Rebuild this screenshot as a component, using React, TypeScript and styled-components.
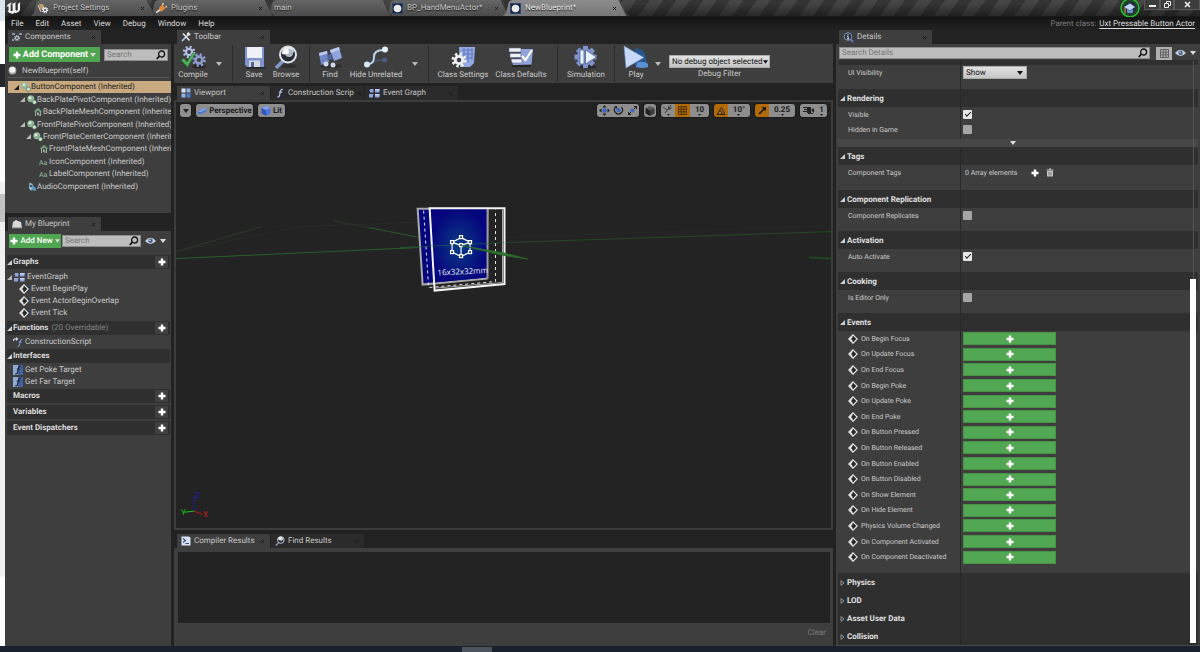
import React from "react";
import styled, { createGlobalStyle, css } from "styled-components";

const GlobalStyle = createGlobalStyle`
  *, *::before, *::after { box-sizing: border-box; }
  body { margin: 0; background: #222; text-rendering: geometricPrecision; }
  body, button, input, select {
    font-family: Roboto, "Liberation Sans", sans-serif;
    font-size: 8px;
    line-height: 12px;
    color: #cacaca;
    text-rendering: geometricPrecision;
  }
  button { border: 0; padding: 0; background: none; cursor: pointer; }
  ul { list-style: none; margin: 0; padding: 0; }
  h2, h3 { margin: 0; font-size: 8px; font-weight: 700; }
  svg { display: block; flex: none; }
`;

/* ---------- page frame ---------- */

const Page = styled.div`
  min-height: 100vh;
  display: flex;
  flex-direction: column;
`;
const Desktop = styled.div`
  flex: 1;
  display: flex;
`;
const BackWindow = styled.div`
  width: 5px;
  display: flex;
  flex-direction: column;
  background: #fff;
`;
const Strip = styled.div<{ $h: number; $c: string }>`
  height: ${(p) => p.$h}px;
  background: ${(p) => p.$c};
`;
const Editor = styled.div`
  flex: 1;
  min-width: 0;
  display: flex;
  flex-direction: column;
  background: #222;
`;
const Taskbar = styled.footer`
  height: 6px;
  display: flex;
  justify-content: center;
  background: #18222e;
  padding-right: 246px;
`;
const TaskItem = styled.div`
  width: 30px;
  margin-top: 1px;
  background: #4a545e;
`;

/* ---------- title bar ---------- */

const TitleBar = styled.header`
  height: 17px;
  display: flex;
  justify-content: space-between;
  background:
    linear-gradient(transparent 20%, rgba(0, 0, 0, 0.4)),
    repeating-linear-gradient(125deg, #454545 0 11px, #343434 11px 22px);
  border-bottom: 1px solid #181818;
`;
const LogoBox = styled.div`
  width: 26px;
  display: flex;
`;
const WindowTabs = styled.nav`
  display: flex;
  align-items: flex-end;
`;
const WindowTab = styled.button<{ $active?: boolean; $z: number }>`
  position: relative;
  z-index: ${(p) => p.$z};
  width: 126px;
  height: 16px;
  margin-right: -8px;
  padding: 0 12px 0 7px;
  display: flex;
  align-items: center;
  gap: 4px;
  text-align: left;
  color: ${(p) => (p.$active ? "#ececec" : "#cacaca")};
  text-shadow: 0 1px 1px #111;
  background: ${(p) =>
    p.$active ? "linear-gradient(#8c8c8c, #777)" : "linear-gradient(#656565, #4b4b4b)"};
  clip-path: polygon(0 100%, 3px 80%, 6px 10%, 9px 0, 115px 0, 118px 10%, 122px 80%, 126px 100%);
  &::after {
    content: "";
    position: absolute;
    right: 4px;
    top: 0;
    width: 2px;
    height: 18px;
    background: #383838;
    transform: rotate(-26deg);
  }
`;
const Grow = styled.span`
  flex: 1;
  white-space: nowrap;
`;
const TitleRight = styled.div`
  display: flex;
`;
const WinButtons = styled.div`
  display: flex;
  margin-left: 3px;
`;
const WinButton = styled.button<{ $w: number }>`
  width: ${(p) => p.$w}px;
  height: 10px;
  display: grid;
  place-items: center;
  background: #3c3c3c;
  border: 1px solid #5a5a5a;
  border-top: 0;
`;
const MenuBar = styled.nav`
  height: 13px;
  display: flex;
  align-items: center;
  justify-content: space-between;
  background: linear-gradient(#141414, #222);
  padding: 0 5px 0 6px;
`;
const MenuItems = styled.div`
  display: flex;
  gap: 12px;
  align-items: center;
`;
const MenuItem = styled.button`
  color: #dadada;
`;
const ParentClass = styled.div`
  color: #7c7c7c;
`;
const ClassLink = styled.a`
  color: #dcdcdc;
  margin-left: 1px;
  text-underline-offset: 2px;
`;

/* ---------- panels ---------- */

const Columns = styled.main`
  flex: 1;
  display: grid;
  grid-template-columns: 166px minmax(0, 1fr) 364px;
  column-gap: 3px;
`;
const Column = styled.div`
  display: flex;
  flex-direction: column;
  min-width: 0;
`;
const TabRow = styled.div<{ $top?: number }>`
  display: flex;
  gap: 1px;
  padding-left: 3px;
  margin-top: ${(p) => p.$top || 0}px;
`;
const PanelTab = styled.button<{ $active?: boolean }>`
  width: 93px;
  height: 14px;
  padding: 0 5px 0 4px;
  display: flex;
  align-items: center;
  gap: 3px;
  text-align: left;
  background: ${(p) => (p.$active ? "#3e3e3e" : "#2b2b2b")};
  color: #c6c6c6;
`;
const Panel = styled.section<{ $fill?: boolean }>`
  background: #3e3e3e;
  ${(p) => p.$fill && css`flex: 1;`}
`;
const ComponentsPanel = styled(Panel)`
  height: 169px;
`;
const Tools = styled.div<{ $gap: number }>`
  display: flex;
  align-items: center;
  padding: 3px 3px 2px 4px;
  gap: ${(p) => p.$gap}px;
`;
const GreenButton = styled.button<{ $big?: boolean }>`
  height: ${(p) => (p.$big ? 15 : 14)}px;
  padding: 0 2px;
  display: flex;
  align-items: center;
  justify-content: center;
  gap: 2px;
  white-space: nowrap;
  background: #4fa550;
  color: #fff;
  font-size: ${(p) => (p.$big ? 9 : 8)}px;
  font-weight: ${(p) => (p.$big ? 700 : 500)};
  width: ${(p) => (p.$big ? 91 : 52)}px;
`;
const SearchBox = styled.label`
  flex: 1;
  min-width: 0;
  height: 12px;
  display: flex;
  align-items: center;
  background: #bdbdbd;
  border: 1px solid #8c8c8c;
  padding: 0 1px 0 2px;
`;
const SearchInput = styled.input`
  flex: 1;
  min-width: 0;
  height: 10px;
  border: 0;
  padding: 0;
  background: none;
  outline: 0;
  line-height: 10px;
  color: #222;
  &::placeholder { color: #777; opacity: 1; }
`;
const SelfRow = styled.div`
  height: 14px;
  margin: 0 2px 0 3px;
  display: flex;
  align-items: center;
  gap: 5px;
  border-bottom: 1px solid #555;
`;
const Tree = styled.ul`
  height: 112px;
  margin: 3px 0 0 3px;
  display: grid;
  grid-auto-rows: 1fr;
`;
const TreeRow = styled.li<{ $depth: number; $selected?: boolean }>`
  min-width: 0;
  min-height: 0;
  display: flex;
  align-items: center;
  overflow: hidden;
  white-space: nowrap;
  padding-left: ${(p) => p.$depth * 6}px;
  ${(p) => p.$selected && css`background: #c9aa80; color: #1b1b1b;`}
`;
const Arrow = styled.span`
  width: 7px;
  flex: none;
`;
const IconSlot = styled.span`
  width: 10px;
  flex: none;
`;

const SectionHead = styled.div<{ $gap?: boolean }>`
  height: 14px;
  margin: ${(p) => (p.$gap ? "0 1px 2px 2px" : "0 1px 0 2px")};
  padding: 0 2px 0 0;
  display: flex;
  align-items: center;
  background: #2f2f2f;
  color: #dcdcdc;
`;
const HeadArrow = styled.span`
  width: 6px;
`;
const Note = styled.span`
  margin-left: 3px;
  color: #858585;
`;
const AddButton = styled.button`
  width: 13px;
  height: 12px;
  margin-left: auto;
  display: grid;
  place-items: center;
  background: #404040;
`;
const Graphs = styled.div`
  padding-top: 5px;
`;
const GraphList = styled.ul<{ $pad?: number }>`
  padding: ${(p) => p.$pad || 1}px 0;
`;
const GraphRow = styled.li<{ $indent: number }>`
  height: 12px;
  display: flex;
  align-items: center;
  gap: 2px;
  padding-left: ${(p) => p.$indent}px;
`;

/* ---------- toolbar ---------- */

const ToolbarPanel = styled.div`
  height: 39px;
  display: flex;
  background: #3e3e3e;
`;
const ToolButton = styled.button<{ $w: number }>`
  width: ${(p) => p.$w}px;
  padding-top: 1px;
  display: flex;
  flex-direction: column;
  align-items: center;
  white-space: nowrap;
`;
const DropButton = styled.button`
  width: 14px;
  display: grid;
  place-items: center;
`;
const Separator = styled.div`
  width: 1px;
  margin: 1px 6px;
  background: #2b2b2b;
`;
const Filter = styled.div`
  margin-left: 4px;
  padding-top: 11px;
  display: flex;
  flex-direction: column;
  align-items: center;
`;
const SelectBox = styled.div<{ $w: number; $edge: number }>`
  position: relative;
  width: ${(p) => p.$w}px;
  height: 13px;
  & > svg { position: absolute; right: ${(p) => p.$edge}px; top: 5px; pointer-events: none; }
`;
const Select = styled.select`
  appearance: none;
  width: 100%;
  height: 13px;
  padding: 0 2px;
  border: 1px solid #aaa;
  border-radius: 0;
  background: linear-gradient(#e2e2e2, #c4c4c4);
  color: #111;
  line-height: 11px;
`;

/* ---------- viewport ---------- */

const Viewport = styled.section`
  position: relative;
  flex: 1;
  min-height: 200px;
  border: 2px solid #3c3c3c;
  background: #232323;
`;
const Scene = styled.svg`
  position: absolute;
  inset: 0;
  width: 100%;
  height: 100%;
`;
const ViewBar = styled.div`
  position: relative;
  display: flex;
  align-items: center;
  gap: 3px;
  padding: 1px 3px;
`;
const Spacer = styled.div`
  flex: 1;
`;
const ViewGroup = styled.div`
  display: flex;
  height: 15px;
  overflow: hidden;
  border-radius: 4px;
  border: 1px solid #1a1a1a;
`;
const ViewButton = styled.button<{ $w: number; $on?: boolean }>`
  width: ${(p) => p.$w}px;
  display: flex;
  align-items: center;
  justify-content: center;
  gap: 2px;
  font-weight: 700;
  color: #1c1c1c;
  background: ${(p) => (p.$on ? "#b36b08" : "#8e8e8e")};
`;
const NumStack = styled.span`
  display: flex;
  flex-direction: column;
  align-items: center;
  line-height: 9px;
`;

/* ---------- compiler results ---------- */

const Results = styled.section`
  height: 98px;
  padding: 4px 3px 0 4px;
  display: flex;
  flex-direction: column;
  background: #3e3e3e;
`;
const Log = styled.div`
  height: 71px;
  background: #222;
`;
const ClearButton = styled.button`
  align-self: flex-end;
  margin: 4px 4px 0 0;
  color: #7a7a7a;
`;

/* ---------- details ---------- */

const DetailsPanel = styled(Panel)`
  padding: 2px 2px 0 2px;
  border-bottom: 1px solid #4a4a4a;
`;
const DetailTools = styled.div`
  display: flex;
  align-items: center;
  height: 14px;
  padding-left: 1px;
`;
const GridButton = styled.button`
  width: 16px;
  height: 13px;
  margin: 0 0 0 6px;
  display: grid;
  place-items: center;
  background: #b0b0b0;
`;
const ViewOptions = styled.button`
  display: flex;
  align-items: center;
  gap: 4px;
  margin: 0 2px 0 3px;
`;
const DetailBody = styled.div`
  position: relative;
`;
const Scrollbar = styled.div`
  position: absolute;
  top: 1px;
  right: 2px;
  bottom: 2px;
  width: 6px;
  padding-top: 218px;
  display: flex;
  background: linear-gradient(90deg, transparent 3px, #555 3px 4px, transparent 4px);
`;
const Thumb = styled.div`
  flex: 1;
  background: #fff;
`;
const Cells = styled.div`
  display: grid;
  grid-template-columns: 122px minmax(0, 1fr);
`;
const Category = styled(Cells)`
  height: 18px;
  background: #2f2f2f;
  color: #e0e0e0;
`;
const CategoryName = styled.h3`
  display: flex;
  align-items: center;
  gap: 2px;
  padding: 1px 0 0 2px;
  white-space: nowrap;
`;
const Value = styled.div`
  border-left: 1px solid #282828;
  padding-left: 2px;
  display: flex;
  align-items: center;
`;
const Rows = styled(Cells)<{ $pad: number }>`
  & > * { height: 15px; }
  & > *:nth-last-child(-n + 2) { height: ${(p) => 15 + p.$pad}px; padding-bottom: ${(p) => p.$pad}px; }
`;
const Name = styled.label`
  display: flex;
  align-items: center;
  gap: 3px;
  padding-left: 10px;
  white-space: nowrap;
  font-size: 7px;
`;
const Sliver = styled(Cells)`
  height: 5px;
  background: #2f2f2f;
`;
const Expander = styled.button`
  width: 100%;
  height: 8px;
  display: grid;
  place-items: center;
  padding-right: 10px;
  background: #474747;
`;
const Check = styled.input`
  appearance: none;
  width: 9px;
  height: 9px;
  margin: 0;
  background: #a5a5a5;
  border-radius: 1px;
  &:checked { background: #e6e6e6; }
  &:checked::after {
    content: "";
    display: block;
    width: 6px;
    height: 3px;
    margin: 2px 0 0 2px;
    border-left: 1px solid #222;
    border-bottom: 1px solid #222;
    transform: rotate(-45deg);
  }
`;
const ArrayText = styled.span`
  margin: 0 14px 0 2px;
  font-size: 7px;
`;
const SmallButton = styled.button`
  margin-right: 7px;
`;
const EventRows = styled.ul`
  height: 242px;
  padding-bottom: 8px;
  display: grid;
  grid-auto-rows: 1fr;
  background: linear-gradient(90deg, transparent 122px, #282828 122px 123px, transparent 123px);
`;
const EventRow = styled.li`
  display: grid;
  grid-template-columns: 125px 93px;
  align-items: center;
`;
const EventButton = styled.button`
  height: 13px;
  display: grid;
  place-items: center;
  background: #52a852;
  border: 1px solid #479247;
`;

/* ---------- icons ---------- */

const Close = () => (
  <svg width="5" height="5" viewBox="0 0 5 5" stroke="#1a1a1a" strokeWidth="1">
    <path d="M1 1l3 3M4 1L1 4" />
  </svg>
);
const Down = ({ c = "#ddd", s = 6 }: { c?: string; s?: number }) => (
  <svg width={s} height="4" viewBox="0 0 6 4" fill={c}>
    <path d="M0 0h6L3 4z" />
  </svg>
);
const Plus = ({ s = 8 }: { s?: number }) => (
  <svg width={s} height={s} viewBox="0 0 8 8" fill="#fff">
    <path d="M2.800 .5h2.400v2.300h2.300v2.400H5.200v2.300H2.800V5.200H.500V2.800h2.300z" />
  </svg>
);
const Open = ({ c = "#d0d0d0" }: { c?: string }) => (
  <svg width="5" height="5" viewBox="0 0 5 5" fill={c}>
    <path d="M5 0v5H0z" />
  </svg>
);
const Closed = () => (
  <svg width="5" height="6" viewBox="0 0 5 6" fill="none" stroke="#aaa" strokeWidth=".8">
    <path d="M1 .6L4 3 1 5.400z" />
  </svg>
);
const Lens = () => (
  <svg width="10" height="10" viewBox="0 0 10 10" fill="none" stroke="#111" strokeWidth="1.300">
    <circle cx="5.600" cy="4" r="3" />
    <path d="M3.400 6.200L.8 9" strokeWidth="1.800" />
  </svg>
);
const Eye = () => (
  <svg width="11" height="8" viewBox="0 0 11 8">
    <path d="M0 4Q5.500-2.500 11 4 5.500 10 0 4z" fill="#ccd2da" />
    <circle cx="5.500" cy="3.800" r="2.200" fill="#3d5a85" />
    <circle cx="5" cy="3.200" r=".8" fill="#fff" />
  </svg>
);
const Ball = () => (
  <svg width="9" height="9" viewBox="0 0 9 9">
    <circle cx="4.500" cy="4.500" r="3.900" fill="#a9a9a9" />
    <circle cx="4.300" cy="3.800" r="3" fill="#f2f2f2" />
  </svg>
);
const BpTab = () => (
  <svg width="11" height="11" viewBox="0 0 11 11">
    <rect width="11" height="11" fill="#2b4679" />
    <rect x="1" y="1" width="9" height="9" fill="#1a2338" />
    <circle cx="5.500" cy="5.500" r="3.800" fill="#e9e9e9" />
  </svg>
);
const SceneIcon = () => (
  <svg width="10" height="10" viewBox="0 0 10 10">
    <circle cx="3.800" cy="3.800" r="3.500" fill="#8fb596" />
    <circle cx="3" cy="2.800" r="1.500" fill="#d8e8da" />
    <circle cx="7.400" cy="7.200" r="2.100" fill="#c5e4c8" stroke="#3c4c3e" strokeWidth=".5" />
  </svg>
);
const MeshIcon = () => (
  <svg width="10" height="10" viewBox="0 0 10 10" fill="none" stroke="#8fb596">
    <path d="M2.500 9V4.500L5 2.500l2.500 2V9" strokeWidth="1.100" />
    <path d="M4.600 8V5.500L6 6.500V9" stroke="#c4dcc8" strokeWidth=".8" />
    <path d="M1 4.500l4-3.500 4 3.500" stroke="#5f8a68" />
  </svg>
);
const TextIcon = () => (
  <svg width="10" height="8" viewBox="0 0 10 8">
    <text x="0" y="7" fontSize="7" fontFamily="Roboto" fill="#93b899">Aa</text>
  </svg>
);
const AudioIcon = () => (
  <svg width="10" height="10" viewBox="0 0 10 10">
    <path d="M2.500.5l3 1.500 1 6-3 .5L2 6z" fill="#9fc6da" />
    <path d="M4 7.500l4.500 1.700.8-2.700L6 3.500z" fill="#5b95b5" />
    <circle cx="4" cy="4" r="1.200" fill="#244d66" />
  </svg>
);
const Diamond = () => (
  <svg width="10" height="10" viewBox="0 0 10 10">
    <path d="M5 .8L9.200 5 5 9.200.8 5z" fill="#262626" stroke="#e4e4e4" strokeWidth="1.200" />
    <path d="M4.500 1.500v7L1 5z" fill="#e4e4e4" />
    <path d="M5 3L3 5l2 2z" fill="#262626" />
  </svg>
);
const GraphIcon = () => (
  <svg width="11" height="9" viewBox="0 0 11 9">
    <path d="M0 1.500h4M2 5.500h3" stroke="#6b7fae" />
    <path d="M1 0h3.500v3.500H1zM6 0h4.500v3.500H6zM0 5h4v3.500H0zM6 5h4.500v3.500H6z" fill="#8fa6dd" />
    <path d="M6 0h4.500v1.500H6zM6 5h4.500v1.500H6z" fill="#c3cff0" />
  </svg>
);
const FuncIcon = ({ boxed }: { boxed?: boolean }) => (
  <svg width="10" height="10" viewBox="0 0 10 10">
    {boxed && (
      <>
        <rect width="10" height="10" fill="#8fa9d6" />
        <path d="M5 0h5v10H5z" fill="#45619c" />
      </>
    )}
    <path
      d="M8 1.500Q6 .8 5.500 3L4.500 7.500Q4 9.500 2.200 8.800M3.800 4.200h3.400"
      fill="none"
      stroke={boxed ? "#182848" : "#a9bdec"}
      strokeWidth="1.200"
    />
  </svg>
);
const ScriptIcon = () => (
  <svg width="10" height="10" viewBox="0 0 10 10" fill="none">
    <path d="M0 4Q1 1.500 3.500 2" stroke="#ccd8f5" strokeWidth="1.200" />
    <path d="M3 0l2.500 2L3 4z" fill="#ccd8f5" />
    <path d="M9.500 2.500Q7.800 2.200 7.400 4L6.600 8Q6.200 9.800 4.600 9.300M5.500 5h3" stroke="#7f9ce0" />
  </svg>
);
const ViewportIcon = () => (
  <svg width="10" height="10" viewBox="0 0 10 10">
    <path d="M.5.5h4v4h-4z" fill="#dce4f5" />
    <path d="M5.500.5h4v4h-4zM.5 5.500h4v4h-4z" fill="#8fb3e6" />
    <path d="M5.500 5.500h4v4h-4z" fill="#4f7fc8" />
  </svg>
);
const Gear = ({ x, y, r, fill, hole }: { x: number; y: number; r: number; fill: string; hole: string }) => (
  <g>
    <circle cx={x} cy={y} r={r} fill="none" stroke={fill} strokeWidth={r * 0.5} strokeDasharray={`${(r * Math.PI) / 8}`} />
    <circle cx={x} cy={y} r={r * 0.85} fill={fill} />
    <circle cx={x} cy={y} r={r * 0.38} fill={hole} />
  </g>
);
const ComponentsIcon = () => (
  <svg width="10" height="10" viewBox="0 0 10 10">
    <Gear x={5} y={6} r={2.4} fill="#c4cbd8" hole="#333" />
    <path d="M0 1h3v2H0zM7 1h3v2H7zM0 7h2v2H0z" fill="#8592ad" />
  </svg>
);
const BookIcon = () => (
  <svg width="10" height="9" viewBox="0 0 10 9">
    <path d="M1 2l3-2 2 1 3 1 1 6H0z" fill="#d8d8d8" />
    <path d="M0 8h10" stroke="#777" />
  </svg>
);
const WrenchIcon = () => (
  <svg width="10" height="10" viewBox="0 0 10 10" fill="none">
    <path d="M1 9l6-6" stroke="#b9cdf0" strokeWidth="1.600" />
    <path d="M9.300 1.700L7.700 3 6.500 2 7.900.5M2 1.500l6.500 7" stroke="#ececec" strokeWidth="1.500" />
  </svg>
);
const DetailsIcon = () => (
  <svg width="11" height="11" viewBox="0 0 11 11">
    <circle cx="5" cy="4.600" r="3.800" fill="#2a303c" stroke="#7c93c9" />
    <path d="M7.600 7.400l2.600 2.800" stroke="#5f7fc8" strokeWidth="1.800" />
    <path d="M5 2.200v1.200M4 4.400h1.200v2.400M4 7h2.400" stroke="#e8e8e8" fill="none" />
  </svg>
);
const ResultsIcon = () => (
  <svg width="10" height="10" viewBox="0 0 10 10">
    <path d="M.5.5h7l2 1v8h-9z" fill="#d9e3f2" />
    <path d="M2 2.500l2.500 2L2 6.500M4.500 7.500h3.500" stroke="#2c4f86" fill="none" strokeWidth="1.200" />
  </svg>
);
const MagnifierIcon = ({ s }: { s: number }) => (
  <svg width={s} height={s} viewBox="0 0 24 24">
    <path d="M9 16l-7 7" stroke="#8197cf" strokeWidth="3.500" />
    <ellipse cx="15" cy="21" rx="8" ry="2" fill="#262626" opacity=".6" />
    <circle cx="14" cy="9.500" r="8" fill="#252a30" stroke="#dfe5ee" strokeWidth="2" />
    <path d="M8 9a6 6 0 0112-2q-4 4-12 2z" fill="#e9edf2" />
    <circle cx="15" cy="8" r="4" fill="#aeb7c2" />
    <circle cx="12.500" cy="6.500" r="2.500" fill="#fff" />
  </svg>
);
const Logo = () => (
  <svg width="18" height="16" viewBox="0 0 18 16">
    <path
      d="M1 7.500Q3 3 7 2.500 5.600 3.500 5.600 5v5.500q1 1.300 2 .3V5Q7.600 4 7 3.800 9.500 3.300 10.500 2.300V10q.8 1 1.600.5.700-.5.700-1V4.500Q13 3 15.500 2 14.900 3 15 4v6Q13.500 13 10.300 13.300L9.200 12.500 8 14Q4 13.500 2.300 11q1.200.2 1.300-.8V6.500Q2.500 5.500 1 7.500z"
      fill="#f2f2f2"
    />
  </svg>
);
const SettingsTabIcon = () => (
  <svg width="11" height="11" viewBox="0 0 11 11">
    <path d="M1 1h4l1 2v3H2z" fill="#b99d72" />
    <path d="M0 2l3 7" stroke="#e5d3b0" />
    <Gear x={7} y={7} r={2.6} fill="#ececec" hole="#444" />
  </svg>
);
const PluginIcon = () => (
  <svg width="11" height="11" viewBox="0 0 11 11">
    <path d="M3 5l3-3.500L9.500 5 6 8.500 3.500 8z" fill="#e3893a" />
    <path d="M6 1.500l2-1M9.500 4.500l1.300-1.500" stroke="#f3c79c" strokeWidth="1.400" />
    <path d="M4 7L0 9.500" stroke="#d8d8d8" strokeWidth="1.600" />
  </svg>
);

const CompileIcon = () => (
  <svg width="26" height="24" viewBox="0 0 26 24">
    <ellipse cx="19" cy="21.500" rx="7" ry="1.800" fill="#262626" />
    <Gear x={9} y={7} r={5} fill="#b3bfe6" hole="#3e3e3e" />
    <Gear x={19} y={15} r={5.5} fill="#8d9bcb" hole="#3e3e3e" />
    <path d="M1 15l3-1.500L7 17 13 7.500 15 9 7.500 22z" fill="#4cb35c" stroke="#2d6e38" strokeWidth=".5" />
  </svg>
);
const SaveIcon = () => (
  <svg width="24" height="24" viewBox="0 0 24 24">
    <path d="M4 22h20v1.500H4z" fill="#262626" />
    <path d="M3 2h19v20H5l-2-2z" fill="#7e93cf" />
    <path d="M5 2h15v11H5z" fill="#eef1f8" />
    <path d="M7 15.500h11V22H7z" fill="#d5d9e2" />
    <path d="M9 17h3v5H9z" fill="#51619a" />
  </svg>
);
const FindIcon = () => (
  <svg width="26" height="24" viewBox="0 0 26 24">
    <ellipse cx="14" cy="21" rx="11" ry="2" fill="#262626" opacity=".7" />
    <path d="M2 8l8-2 2 11-8 3z" fill="#7287c6" />
    <path d="M13 5l9-3 3 11-8 3z" fill="#8fa3dc" />
    <path d="M2 8l8-2 .5 2.500L2.500 11zM13 5l9-3 .7 3-9 3z" fill="#bac8ee" />
    <path d="M10 10l5-1 .8 5-5 1z" fill="#52639c" />
    <circle cx="9" cy="19" r="2.500" fill="#cfd7ea" />
    <circle cx="16" cy="20" r="2.500" fill="#cfd7ea" />
  </svg>
);
const HideIcon = () => (
  <svg width="26" height="24" viewBox="0 0 26 24" fill="none">
    <path d="M5 19q6 0 6-7t9-7" stroke="#b7d2e6" strokeWidth="2" />
    <path d="M11 17q3-2 9-2" stroke="#4a5670" strokeWidth="1.500" />
    <circle cx="22" cy="4.500" r="3" fill="#e2f0fa" />
    <circle cx="4" cy="19.500" r="3" fill="#d3e8f6" />
    <circle cx="21.500" cy="15" r="2.500" fill="#4c5d80" />
  </svg>
);
const ClassSettingsIcon = () => (
  <svg width="26" height="24" viewBox="0 0 26 24">
    <path d="M9 2l16 0-1 16-4 4H10z" fill="#93a9e2" />
    <path d="M12 5h11M12 9h11M12 13h10M14 3v10M18 3v14M22 3v12" stroke="#6179bd" />
    <Gear x={9} y={15} r={6} fill="#f0f0f0" hole="#3a3f4c" />
  </svg>
);
const ClassDefaultsIcon = () => (
  <svg width="26" height="24" viewBox="0 0 26 24">
    <path d="M4 20h19v2H4z" fill="#262626" />
    <path d="M13 4h12l-1.500 15.500L5 20 3.500 14H13z" fill="#90a4dc" />
    <path d="M1 3h12v4H1zM2 8.500h11v4H2zM3 14h11v4H4z" fill="#eef0f5" stroke="#5b6995" strokeWidth=".6" />
    <path d="M14 11l3.500 4L24 5" fill="none" stroke="#fff" strokeWidth="2" />
  </svg>
);
const SimulationIcon = () => (
  <svg width="26" height="24" viewBox="0 0 26 24">
    <ellipse cx="15" cy="22" rx="9" ry="1.500" fill="#262626" />
    <g stroke="#7e93cd" strokeWidth="5">
      <path d="M12.500 1v22M1.500 12h22M4.700 4.200l15.600 15.600M20.300 4.200L4.700 19.800" />
    </g>
    <circle cx="12.500" cy="12" r="8.500" fill="#7e93cd" />
    <path d="M7 5h4v14H7zM12.500 5l11 7-11 7z" fill="#e9f2fb" stroke="#4f628f" strokeWidth=".8" />
  </svg>
);
const PlayIcon = () => (
  <svg width="26" height="24" viewBox="0 0 26 24">
    <path d="M12 3q12 1 11 13 3 2 2 5-6 3-13 1z" fill="#27568f" />
    <path d="M14 18q6-3 11 1v3q-5 2-12 0z" fill="#5c92d4" />
    <path d="M1 1l20 11.500L3 23z" fill="#c6d9f6" stroke="#7392c8" strokeWidth=".6" />
  </svg>
);
const PillIcon = () => (
  <svg width="10" height="8" viewBox="0 0 10 8">
    <path d="M1 4.500L7 1l3 1-1 2.500L3 7.500.500 6.500z" fill="#4a78cf" />
    <path d="M1 4.500L7 1l3 1-6 3z" fill="#7fa4ea" />
  </svg>
);
const CubeIcon = ({ a, b, c }: { a: string; b: string; c: string }) => (
  <svg width="10" height="10" viewBox="0 0 10 10">
    <path d="M5 0l4.500 2L5 4.200.500 2z" fill={a} />
    <path d="M.5 2L5 4.200V10L.500 7.500z" fill={b} />
    <path d="M9.500 2L5 4.200V10l4.500-2.500z" fill={c} />
  </svg>
);
const MoveIcon = () => (
  <svg width="11" height="11" viewBox="0 0 11 11">
    <path d="M5.500 0l2 2.500h-4zM5.500 11l2-2.500h-4zM0 5.500l2.500-2v4zM11 5.500l-2.500-2v4z" fill="#222" />
    <circle cx="5.500" cy="5.500" r="2.200" fill="#3f68c4" />
  </svg>
);
const RotateIcon = () => (
  <svg width="11" height="11" viewBox="0 0 11 11">
    <path d="M8.500 2.200a4 4 0 11-6 0" fill="none" stroke="#222" strokeWidth="1.200" />
    <path d="M1 1.500l3-.5v3z" fill="#222" />
    <circle cx="5.500" cy="5" r="2.200" fill="#3f68c4" />
  </svg>
);
const ScaleIcon = () => (
  <svg width="11" height="11" viewBox="0 0 11 11">
    <path d="M6.500 1H10v3.500zM1 6.500V10h3.500z" fill="#222" />
    <path d="M2 9l7-7" stroke="#222" />
    <circle cx="5.500" cy="5.500" r="2" fill="#3f68c4" />
  </svg>
);
const SurfaceIcon = () => (
  <svg width="10" height="11" viewBox="0 0 10 11" fill="none" stroke="#2a2a2a">
    <path d="M0 2l4 3 5-2M4 5l-2 3M5.500 1v3M8 0L6 4" strokeWidth=".8" />
    <path d="M4 9h3l-1.500 2z" fill="#2a2a2a" stroke="none" />
  </svg>
);
const GridIcon = ({ c, s = 9 }: { c: string; s?: number }) => (
  <svg width={s} height={s} viewBox="0 0 9 9" fill="none" stroke={c} strokeWidth=".9">
    <path d="M.5.5h8v8h-8zM.5 3.200h8M.5 5.800h8M3.200.5v8M5.800.5v8" />
  </svg>
);
const AngleIcon = () => (
  <svg width="10" height="10" viewBox="0 0 10 10" fill="none" stroke="#222">
    <path d="M1 8.500h8L5.500 1.500zM3 4.500q3 .5 3.500 4" />
  </svg>
);
const ArrowIcon = () => (
  <svg width="9" height="9" viewBox="0 0 9 9">
    <path d="M1 8l5-5" stroke="#1a1a1a" strokeWidth="1.600" />
    <path d="M3.500 1H8v4.500z" fill="#1a1a1a" />
  </svg>
);
const CameraIcon = () => (
  <svg width="11" height="9" viewBox="0 0 11 9" fill="#222">
    <path d="M0 1h4v1H0zM1 3h3v1H1zM0 5h4v1H0zM4 1h4v6H4zM8 4l3-2v5zM5 7h5v1H5z" />
  </svg>
);
const TrashIcon = () => (
  <svg width="8" height="9" viewBox="0 0 8 9" fill="#c8c8c8">
    <path d="M.5 1.500h2.500V.5h2v1h2.500v1h-7zM1 3h6v5.500H1z" />
    <path d="M2.800 4v3.500M4 4v3.500M5.200 4v3.500" stroke="#555" strokeWidth=".5" />
  </svg>
);
const Graduate = () => (
  <svg width="22" height="18" viewBox="0 0 22 18">
    <circle cx="11" cy="8" r="9" fill="#1f4a24" stroke="#25c52c" strokeWidth="1.400" />
    <circle cx="11" cy="8" r="6.500" fill="#263040" />
    <path d="M5 7l6-3.500L16 7l-5 3.500z" fill="#bcd7f3" />
    <path d="M8 9v3.500q3 1.500 6 0V9l-3 1.800z" fill="#6f93c2" />
    <path d="M6 7.500v6" stroke="#d9a24a" />
  </svg>
);

/* ---------- data ---------- */

type Kind = "scene" | "mesh" | "text" | "audio";
const components: { name: string; depth: number; kind: Kind; open?: boolean }[] = [
  { name: "ButtonComponent (Inherited)", depth: 1, kind: "scene", open: true },
  { name: "BackPlatePivotComponent (Inherited)", depth: 2, kind: "scene", open: true },
  { name: "BackPlateMeshComponent (Inherited)", depth: 3, kind: "mesh" },
  { name: "FrontPlatePivotComponent (Inherited)", depth: 2, kind: "scene", open: true },
  { name: "FrontPlateCenterComponent (Inherited)", depth: 3, kind: "scene", open: true },
  { name: "FrontPlateMeshComponent (Inherited)", depth: 4, kind: "mesh" },
  { name: "IconComponent (Inherited)", depth: 4, kind: "text" },
  { name: "LabelComponent (Inherited)", depth: 4, kind: "text" },
  { name: "AudioComponent (Inherited)", depth: 2, kind: "audio" },
];
const kindIcon: Record<Kind, React.ReactNode> = {
  scene: <SceneIcon />,
  mesh: <MeshIcon />,
  text: <TextIcon />,
  audio: <AudioIcon />,
};
const events = [
  "On Begin Focus", "On Update Focus", "On End Focus", "On Begin Poke", "On Update Poke",
  "On End Poke", "On Button Pressed", "On Button Released", "On Button Enabled",
  "On Button Disabled", "On Show Element", "On Hide Element", "Physics Volume Changed",
  "On Component Activated", "On Component Deactivated",
];
const windowTabs = [
  { name: "Project Settings", icon: <SettingsTabIcon /> },
  { name: "Plugins", icon: <PluginIcon /> },
  { name: "main", icon: null },
  { name: "BP_HandMenuActor*", icon: <BpTab /> },
  { name: "NewBlueprint*", icon: <BpTab />, active: true },
];

/* ---------- parts ---------- */

const Tab = ({ name, icon, active }: { name: string; icon: React.ReactNode; active?: boolean }) => (
  <PanelTab $active={active}>
    {icon}
    <Grow>{name}</Grow>
    <Close />
  </PanelTab>
);
const Search = ({ text }: { text: string }) => (
  <SearchBox>
    <SearchInput placeholder={text} aria-label={text} />
    <Lens />
  </SearchBox>
);
const Head = ({ name, open, note, add = true, gap }: { name: string; open?: boolean; note?: string; add?: boolean; gap?: boolean }) => (
  <SectionHead $gap={gap}>
    <HeadArrow>{open && <Open />}</HeadArrow>
    <h3>{name}</h3>
    {note && <Note>{note}</Note>}
    {add && (
      <AddButton aria-label={`Add to ${name}`}>
        <Plus />
      </AddButton>
    )}
  </SectionHead>
);
const Cat = ({ name, closed }: { name: string; closed?: boolean }) => (
  <Category>
    <CategoryName>
      {closed ? <Closed /> : <Open />}
      {name}
    </CategoryName>
    <Value />
  </Category>
);
const CheckRow = ({ name, on }: { name: string; on?: boolean }) => {
  const id = name.replace(/ /g, "-").toLowerCase();
  return (
    <>
      <Name htmlFor={id}>{name}</Name>
      <Value>
        <Check type="checkbox" id={id} defaultChecked={on} />
      </Value>
    </>
  );
};
const Num = ({ w, text }: { w: number; text: string }) => (
  <ViewButton $w={w}>
    <NumStack>
      {text}
      <svg width="3" height="2" viewBox="0 0 3 2" fill="#222">
        <path d="M0 0h3L1.500 2z" />
      </svg>
    </NumStack>
  </ViewButton>
);

const ButtonScene = () => (
  <Scene viewBox="176 102 656 427" preserveAspectRatio="xMidYMid slice">
    <defs>
      <radialGradient id="plate">
        <stop offset="0" stopColor="#0a3c84" />
        <stop offset="1" stopColor="#05057e" />
      </radialGradient>
    </defs>
    <g fill="none">
      <path d="M176 252L300 227 430 222" stroke="#262c26" />
      <path d="M505 238L832 226" stroke="#252925" />
      <path d="M176 259L418 248" stroke="#256025" />
      <path d="M505 243L832 232" stroke="#245024" strokeWidth=".8" />
      <path d="M176 252L262 227" stroke="#2c3a27" />
      <path d="M334 221L380 230" stroke="#263826" />
      <path d="M370 228L420 238" stroke="#265c26" />
      <path d="M810 258l22 1" stroke="#1f451f" strokeWidth="2" />
    </g>
    <path d="M418 209l70 0-1 70-64 6z" fill="#05057e" stroke="#a9a9a9" strokeWidth="2" />
    <path d="M431 209h57v69l-53 5z" fill="url(#plate)" />
    <path d="M488 209v70" stroke="#9a9aa6" strokeWidth="2" />
    <path d="M424 211l5 77 67-6V210" fill="none" stroke="#e4e4e4" strokeDasharray="3 3" strokeWidth="1" />
    <path d="M430 208.500l75 0v76L435 291z" fill="none" stroke="#f4f4f4" strokeWidth="2" />
    <path d="M503 210v73l-67 5.500" fill="none" stroke="#aaa" strokeWidth="1" />
    <path d="M400 248l105-5" stroke="#1f6a3c" strokeWidth=".6" />
    <g fill="none" stroke="#fff" strokeWidth="1.200">
      <path d="M461.500 238l9 4.500v10l-9 4.500-9-4.500v-10zM452.500 242.500l9 3.500 9-3.500M461.500 246v11" />
      <g fill="#0a3c84">
        <rect x="460" y="236" width="3" height="3" />
        <rect x="451" y="241" width="3" height="3" />
        <rect x="469" y="241" width="3" height="3" />
        <rect x="460" y="244" width="3" height="3" />
        <rect x="451" y="251" width="3" height="3" />
        <rect x="469" y="251" width="3" height="3" />
        <rect x="460" y="255" width="3" height="3" />
      </g>
    </g>
    <path d="M462 246L505 253.500l23 6-26-4z" fill="#2c7a2c" stroke="#2c6a2c" strokeWidth=".8" />
    <text x="438" y="276" fontSize="8" fontFamily="Open Sans, sans-serif" fill="#f0f0f0" transform="rotate(-3 438 276)">
      16x32x32mm
    </text>
    <path d="M194 512V497" stroke="#1c1ca8" />
    <path d="M194 512l-10 1" stroke="#12c512" />
    <path d="M194 512l8 3" stroke="#c01515" />
    <g fontSize="8" fontFamily="Roboto, sans-serif">
      <text x="195" y="499" fill="#2020c8">Z</text>
      <text x="181" y="516" fill="#12c512">Y</text>
      <text x="203" y="518" fill="#d01818">X</text>
    </g>
  </Scene>
);

export default function App() {
  return (
    <Page>
      <GlobalStyle />
      <Desktop>
        <BackWindow>
          <Strip $h={21} $c="#dde5ec" />
          <Strip $h={43} $c="#ffffff" />
          <Strip $h={23} $c="#26272b" />
          <Strip $h={95} $c="#ffffff" />
          <Strip $h={12} $c="#f0f0f0" />
          <Strip $h={28} $c="#c2c2c2" />
          <Strip $h={355} $c="#f0f0f0" />
        </BackWindow>
        <Editor>
          <TitleBar>
            <WindowTabs>
              <LogoBox><Logo /></LogoBox>
              {windowTabs.map((t, i) => (
                <WindowTab key={t.name} $active={t.active} $z={t.active ? 9 : 8 - i}>
                  {t.icon}
                  <Grow>{t.name}</Grow>
                  {t.icon && <Close />}
                </WindowTab>
              ))}
            </WindowTabs>
            <TitleRight>
              <Graduate />
              <WinButtons>
                <WinButton $w={16} aria-label="Minimize">
                  <svg width="7" height="6" viewBox="0 0 7 6"><path d="M0 3h7v2H0z" fill="#eee" /></svg>
                </WinButton>
                <WinButton $w={14} aria-label="Restore">
                  <svg width="7" height="7" viewBox="0 0 7 7" fill="none" stroke="#eee"><path d="M.5 2.500h4v4h-4zM2.500 2V.5h4v4H5" /></svg>
                </WinButton>
                <WinButton $w={26} aria-label="Close">
                  <svg width="7" height="7" viewBox="0 0 7 7" stroke="#eee" strokeWidth="1.600"><path d="M1 1l5 5M6 1L1 6" /></svg>
                </WinButton>
              </WinButtons>
            </TitleRight>
          </TitleBar>
          <MenuBar>
            <MenuItems>
              {["File", "Edit", "Asset", "View", "Debug", "Window", "Help"].map((m) => (
                <MenuItem key={m}>{m}</MenuItem>
              ))}
            </MenuItems>
            <ParentClass>
              Parent class: <ClassLink href="#parent">Uxt Pressable Button Actor</ClassLink>
            </ParentClass>
          </MenuBar>

          <Columns>
            <Column>
              <TabRow><Tab name="Components" icon={<ComponentsIcon />} active /></TabRow>
              <ComponentsPanel>
                <Tools $gap={4}>
                  <GreenButton $big><Plus />Add Component<Down /></GreenButton>
                  <Search text="Search" />
                </Tools>
                <SelfRow><Ball />NewBlueprint(self)</SelfRow>
                <Tree>
                  {components.map((c, i) => (
                    <TreeRow key={c.name} $depth={c.depth} $selected={i === 0}>
                      <Arrow>{c.open && <Open c={i === 0 ? "#1b1b1b" : "#b8b8b8"} />}</Arrow>
                      <IconSlot>{kindIcon[c.kind]}</IconSlot>
                      {c.name}
                    </TreeRow>
                  ))}
                </Tree>
              </ComponentsPanel>
              <TabRow $top={4}><Tab name="My Blueprint" icon={<BookIcon />} active /></TabRow>
              <Panel $fill>
                <Tools $gap={1}>
                  <GreenButton><Plus />Add New<Down s={5} /></GreenButton>
                  <Search text="Search" />
                  <ViewOptions aria-label="View options"><Eye /><Down /></ViewOptions>
                </Tools>
                <Graphs>
                  <Head name="Graphs" open />
                  <GraphList $pad={2}>
                    <GraphRow $indent={2}><Open c="#b8b8b8" /><GraphIcon />EventGraph</GraphRow>
                    {["Event BeginPlay", "Event ActorBeginOverlap", "Event Tick"].map((n) => (
                      <GraphRow key={n} $indent={14}><Diamond />{n}</GraphRow>
                    ))}
                  </GraphList>
                </Graphs>
                <Head name="Functions" open note="(20 Overridable)" />
                <GraphList>
                  <GraphRow $indent={8}><ScriptIcon />ConstructionScript</GraphRow>
                </GraphList>
                <Head name="Interfaces" open add={false} />
                <GraphList>
                  <GraphRow $indent={8}><FuncIcon boxed />Get Poke Target</GraphRow>
                  <GraphRow $indent={8}><FuncIcon boxed />Get Far Target</GraphRow>
                </GraphList>
                <Head name="Macros" gap />
                <Head name="Variables" gap />
                <Head name="Event Dispatchers" gap />
              </Panel>
            </Column>

            <Column>
              <TabRow><Tab name="Toolbar" icon={<WrenchIcon />} active /></TabRow>
              <ToolbarPanel>
                <ToolButton $w={38}><CompileIcon />Compile</ToolButton>
                <DropButton aria-label="Compile options"><Down c="#bbb" /></DropButton>
                <Separator />
                <ToolButton $w={30}><SaveIcon />Save</ToolButton>
                <ToolButton $w={34}><MagnifierIcon s={24} />Browse</ToolButton>
                <Separator />
                <ToolButton $w={28}><FindIcon />Find</ToolButton>
                <ToolButton $w={64}><HideIcon />Hide Unrelated</ToolButton>
                <DropButton aria-label="Hide options"><Down c="#bbb" /></DropButton>
                <Separator />
                <ToolButton $w={56}><ClassSettingsIcon />Class Settings</ToolButton>
                <ToolButton $w={60}><ClassDefaultsIcon />Class Defaults</ToolButton>
                <Separator />
                <ToolButton $w={44}><SimulationIcon />Simulation</ToolButton>
                <Separator />
                <ToolButton $w={30}><PlayIcon />Play</ToolButton>
                <DropButton aria-label="Play options"><Down c="#bbb" /></DropButton>
                <Filter>
                  <SelectBox $w={101} $edge={2}>
                    <Select id="debug-filter"><option>No debug object selected</option></Select>
                    <Down c="#111" s={5} />
                  </SelectBox>
                  <label htmlFor="debug-filter">Debug Filter</label>
                </Filter>
              </ToolbarPanel>
              <TabRow $top={3}>
                <Tab name="Viewport" icon={<ViewportIcon />} active />
                <Tab name="Construction Scrip" icon={<FuncIcon />} />
                <Tab name="Event Graph" icon={<GraphIcon />} />
              </TabRow>
              <Viewport>
                <ButtonScene />
                <ViewBar>
                  <ViewGroup><ViewButton $w={11} aria-label="Viewport options"><Down c="#222" /></ViewButton></ViewGroup>
                  <ViewGroup><ViewButton $w={57}><PillIcon />Perspective</ViewButton></ViewGroup>
                  <ViewGroup><ViewButton $w={27}><CubeIcon a="#7d9fee" b="#2f56b8" c="#4a74d8" />Lit</ViewButton></ViewGroup>
                  <Spacer />
                  <ViewGroup>
                    <ViewButton $w={14} aria-label="Move"><MoveIcon /></ViewButton>
                    <ViewButton $w={14} aria-label="Rotate"><RotateIcon /></ViewButton>
                    <ViewButton $w={14} aria-label="Scale"><ScaleIcon /></ViewButton>
                  </ViewGroup>
                  <ViewGroup><ViewButton $w={12} aria-label="World space"><CubeIcon a="#5a5a5a" b="#222" c="#3a3a3a" /></ViewButton></ViewGroup>
                  <ViewGroup>
                    <ViewButton $w={14} aria-label="Surface snapping"><SurfaceIcon /></ViewButton>
                    <ViewButton $w={15} $on aria-label="Grid snapping"><GridIcon c="#4a2c00" /></ViewButton>
                    <Num w={19} text="10" />
                  </ViewGroup>
                  <ViewGroup>
                    <ViewButton $w={14} $on aria-label="Angle snapping"><AngleIcon /></ViewButton>
                    <Num w={22} text="10°" />
                  </ViewGroup>
                  <ViewGroup>
                    <ViewButton $w={14} $on aria-label="Scale snapping"><ArrowIcon /></ViewButton>
                    <Num w={26} text="0.25" />
                  </ViewGroup>
                  <ViewGroup>
                    <ViewButton $w={16} aria-label="Camera speed"><CameraIcon /></ViewButton>
                    <Num w={11} text="1" />
                  </ViewGroup>
                </ViewBar>
              </Viewport>
              <TabRow $top={4}>
                <Tab name="Compiler Results" icon={<ResultsIcon />} active />
                <Tab name="Find Results" icon={<MagnifierIcon s={10} />} />
              </TabRow>
              <Results>
                <Log />
                <ClearButton>Clear</ClearButton>
              </Results>
            </Column>

            <Column>
              <TabRow><Tab name="Details" icon={<DetailsIcon />} active /></TabRow>
              <DetailsPanel $fill>
                <DetailTools>
                  <Search text="Search Details" />
                  <GridButton aria-label="Property matrix"><GridIcon c="#5a5a5a" /></GridButton>
                  <ViewOptions aria-label="View options"><Eye /><Down /></ViewOptions>
                </DetailTools>
                <DetailBody>
                  <Sliver><span /><Value /></Sliver>
                  <Rows $pad={9}>
                    <Name htmlFor="ui-visibility">UI Visibility</Name>
                    <Value>
                      <SelectBox $w={64} $edge={4}>
                        <Select id="ui-visibility"><option>Show</option></Select>
                        <Down c="#111" />
                      </SelectBox>
                    </Value>
                  </Rows>
                  <Cat name="Rendering" />
                  <Rows $pad={2}>
                    <CheckRow name="Visible" on />
                    <CheckRow name="Hidden in Game" />
                  </Rows>
                  <Expander aria-label="Show advanced"><Down /></Expander>
                  <Cat name="Tags" />
                  <Rows $pad={10}>
                    <Name as="span">Component Tags</Name>
                    <Value>
                      <ArrayText>0 Array elements</ArrayText>
                      <SmallButton aria-label="Add element"><Plus /></SmallButton>
                      <SmallButton aria-label="Remove all"><TrashIcon /></SmallButton>
                    </Value>
                  </Rows>
                  <Cat name="Component Replication" />
                  <Rows $pad={8}><CheckRow name="Component Replicates" /></Rows>
                  <Cat name="Activation" />
                  <Rows $pad={8}><CheckRow name="Auto Activate" on /></Rows>
                  <Cat name="Cooking" />
                  <Rows $pad={8}><CheckRow name="Is Editor Only" /></Rows>
                  <Cat name="Events" />
                  <EventRows>
                    {events.map((e) => (
                      <EventRow key={e}>
                        <Name as="span"><Diamond />{e}</Name>
                        <EventButton aria-label={`Add ${e}`}><Plus /></EventButton>
                      </EventRow>
                    ))}
                  </EventRows>
                  <Cat name="Physics" closed />
                  <Cat name="LOD" closed />
                  <Cat name="Asset User Data" closed />
                  <Cat name="Collision" closed />
                  <Scrollbar><Thumb /></Scrollbar>
                </DetailBody>
              </DetailsPanel>
            </Column>
          </Columns>
        </Editor>
      </Desktop>
      <Taskbar><TaskItem /></Taskbar>
    </Page>
  );
}
